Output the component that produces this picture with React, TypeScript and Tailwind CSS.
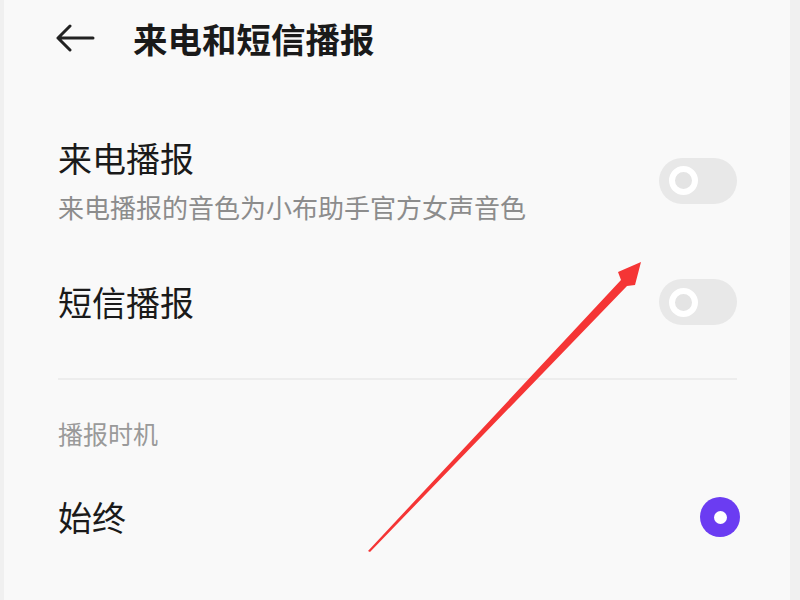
import React from "react";

const cjk = { fontFamily: '"Noto Sans CJK SC", "Noto Sans", sans-serif' };

function Toggle() {
  return (
    <div className="w-[78px] h-[46px] rounded-full bg-[#e8e8e8] flex items-center pl-[10px]">
      <div className="w-[29px] h-[29px] rounded-full border-[6px] border-white bg-[#e4e4e4]" />
    </div>
  );
}

export default function App() {
  return (
    <div className="relative w-[800px] h-[600px] overflow-hidden bg-[#f0f0f0] flex" style={cjk}>
      <div className="ml-[4px] w-[786px] h-full bg-[#f9f9f9]">
        {/* header */}
        <div className="h-[76px] flex items-center pl-[51px]">
          <svg width="40" height="28" viewBox="0 0 40 28" fill="none" stroke="#222" strokeWidth="3" strokeLinecap="round" strokeLinejoin="round">
            <path d="M38 14H3M15 2L3 14l12 12" />
          </svg>
          <span className="ml-[38px] text-[34.5px] leading-[44px] font-bold text-[#1a1a1a]">来电和短信播报</span>
        </div>

        <div className="pl-[54px] pr-[53px]">
          <div className="mt-[60px] flex items-center justify-between">
            <div>
              <div className="text-[34px] leading-[44px] text-[#1a1a1a]">来电播报</div>
              <div className="mt-[9px] text-[26px] leading-[36px] text-[#8c8c8c]">来电播报的音色为小布助手官方女声音色</div>
            </div>
            <Toggle />
          </div>

          <div className="mt-[54px] h-[46px] flex items-center justify-between">
            <div className="text-[34px] leading-[44px] text-[#1a1a1a]">短信播报</div>
            <Toggle />
          </div>

          <div className="mt-[53px] h-[2px] bg-[#ededed]" />

          <div className="mt-[36px] text-[25px] leading-[34px] text-[#9a9a9a]">播报时机</div>

          <div className="mt-[45px] flex items-center justify-between">
            <div className="text-[34px] leading-[44px] text-[#1a1a1a]">始终</div>
            <div className="-mr-[3px] w-[40px] h-[40px] rounded-full bg-[#6b3cf2] flex items-center justify-center">
              <div className="w-[13px] h-[13px] rounded-full bg-white" />
            </div>
          </div>
        </div>
      </div>

      {/* red annotation arrow */}
      <svg className="absolute left-0 top-0" width="800" height="600" viewBox="0 0 800 600">
        <polygon
          points="368,551 621,280 618,272 641,262 635,285 627,286 370,552"
          fill="#f53535"
        />
      </svg>
    </div>
  );
}
